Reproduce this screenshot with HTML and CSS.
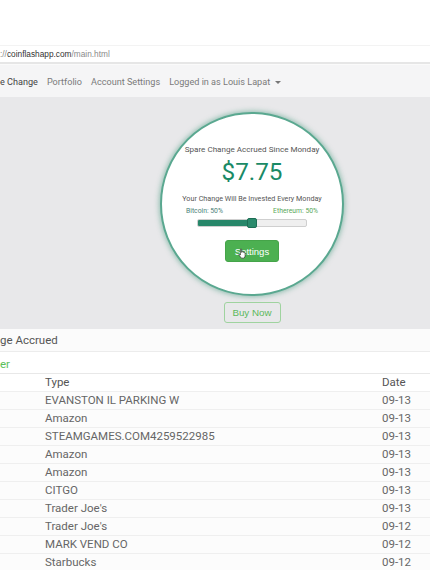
FILE: index.html
```html
<!DOCTYPE html>
<html>
<head>
<meta charset="utf-8">
<link rel="stylesheet" href="styles.css">
</head>
<body>
<div class="page">
  <div class="chrome"></div>
  <div class="urlbar"><span class="dim">://</span><span class="host">coinflashapp.com</span><span class="dim">/main.html</span></div>
  <nav class="nav">
    <span class="nav-item active">e Change</span>
    <span class="nav-item">Portfolio</span>
    <span class="nav-item">Account Settings</span>
    <span class="nav-item">Logged in as Louis Lapat <span class="caret"></span></span>
  </nav>
  <section class="hero">
    <div class="circle">
      <div class="since">Spare Change Accrued Since Monday</div>
      <div class="amount">$7.75</div>
      <div class="invested">Your Change Will Be Invested Every Monday</div>
      <div class="split">
        <span class="btc">Bitcoin: 50%</span>
        <span class="eth">Ethereum: 50%</span>
      </div>
      <div class="slider">
        <div class="fill"></div>
        <div class="handle"></div>
      </div>
      <div class="settings-wrap">
        <button class="btn-settings">Settings</button>
        <svg class="cursor" viewBox="0 0 10 13" width="8" height="11"><path d="M3 1 Q3.8 0.3 4.5 1 V5 H5 V4.3 Q5.7 3.7 6.3 4.3 V5 Q7 4.4 7.6 5 V5.6 Q8.3 5.1 8.9 5.7 V9 Q8.9 11 7.6 12.3 H4.2 L1.2 8.4 Q0.8 7.4 1.8 7.3 L3 8.5 Z" fill="#fff" stroke="#222" stroke-width="0.8" stroke-linejoin="round"/></svg>
      </div>
    </div>
    <button class="btn-buy">Buy Now</button>
  </section>
  <div class="panel-head">ge Accrued</div>
  <div class="tab">er</div>
  <table class="tx">
    <thead><tr><th class="type">Type</th><th class="date">Date</th></tr></thead>
    <tbody>
      <tr><td class="type">EVANSTON IL PARKING W</td><td class="date">09-13</td></tr>
      <tr><td class="type">Amazon</td><td class="date">09-13</td></tr>
      <tr><td class="type">STEAMGAMES.COM4259522985</td><td class="date">09-13</td></tr>
      <tr><td class="type">Amazon</td><td class="date">09-13</td></tr>
      <tr><td class="type">Amazon</td><td class="date">09-13</td></tr>
      <tr><td class="type">CITGO</td><td class="date">09-13</td></tr>
      <tr><td class="type">Trader Joe's</td><td class="date">09-13</td></tr>
      <tr><td class="type">Trader Joe's</td><td class="date">09-12</td></tr>
      <tr><td class="type">MARK VEND CO</td><td class="date">09-12</td></tr>
      <tr><td class="type">Starbucks</td><td class="date">09-12</td></tr>
    </tbody>
  </table>
</div>
</body>
</html>
```

FILE: styles.css
```css
html, body {
  margin: 0;
  padding: 0;
  background: #ffffff;
}
.page {
  width: 430px;
  height: 570px;
  overflow: hidden;
  font-family: Roboto, "Liberation Sans", sans-serif;
  color: #666;
}
.chrome {
  height: 46px;
  background: #ffffff;
  border-bottom: 1px solid #f3f3f3;
  box-sizing: border-box;
}
.urlbar {
  height: 16px;
  line-height: 16px;
  font-family: "Liberation Sans", Arial, sans-serif;
  font-size: 8.3px;
  color: #888;
  background: #fff;
  border-bottom: 2px solid #e6e6e6;
  box-sizing: content-box;
}
.urlbar .host { color: #333; }
.urlbar .dim { color: #8a8a8a; }
.nav {
  height: 33px;
  background: #f5f5f6;
  display: flex;
  align-items: center;
  gap: 9px;
  font-size: 9.1px;
  color: #7a7a7a;
  border-top: 1px solid #fafafa;
  box-sizing: border-box;
  padding-top: 1px;
}
.nav .active { color: #444; }
.caret {
  display: inline-block;
  width: 0;
  height: 0;
  border-left: 3px solid transparent;
  border-right: 3px solid transparent;
  border-top: 3px solid #777;
  vertical-align: middle;
  margin-left: 3px;
}
.hero {
  height: 232px;
  background: #e8e8ea;
  display: flex;
  flex-direction: column;
  align-items: center;
  padding-left: 74px;
  box-sizing: border-box;
}
.circle {
  margin-top: 15px;
  width: 184px;
  height: 184px;
  border-radius: 50%;
  background: #ffffff;
  border: 2px solid #5aa890;
  box-shadow: 0 0 5px 1px rgba(60, 150, 120, 0.5);
  box-sizing: border-box;
  display: flex;
  flex-direction: column;
  align-items: center;
  padding-top: 30px;
}
.since {
  font-size: 8.1px;
  color: #555;
  line-height: 10px;
}
.amount {
  margin-top: 4px;
  font-size: 24.3px;
  line-height: 28px;
  color: #1a8a66;
}
.invested {
  margin-top: 8px;
  font-size: 7.2px;
  line-height: 9px;
  color: #555;
}
.split {
  margin-top: 4px;
  width: 132px;
  display: flex;
  justify-content: space-between;
  font-size: 6.8px;
  line-height: 9px;
}
.btc { color: #4a7f78; }
.eth { color: #5aa85a; }
.slider {
  margin-top: 3px;
  width: 110px;
  height: 8px;
  background: #efefef;
  border: 1px solid #cfcfcf;
  border-radius: 2px;
  position: relative;
  box-sizing: border-box;
}
.fill {
  width: 54px;
  height: 100%;
  background: #27876a;
  border-radius: 1px 0 0 1px;
}
.handle {
  position: absolute;
  left: 49px;
  top: -2px;
  width: 10px;
  height: 10px;
  background: #2a8a6c;
  border: 1px solid #1d6e55;
  border-radius: 2px;
  box-sizing: border-box;
}
.settings-wrap {
  margin-top: 13px;
  position: relative;
}
.btn-settings {
  display: block;
  width: 54px;
  height: 22px;
  background: #4cb051;
  border: 1px solid #45a449;
  border-radius: 3px;
  color: #fff;
  font-family: "Liberation Sans", Arial, sans-serif;
  font-size: 9.5px;
  padding: 0;
}
.cursor {
  position: absolute;
  left: 13px;
  top: 8px;
}
.btn-buy {
  margin-top: 6px;
  width: 57px;
  height: 21px;
  background: transparent;
  border: 1px solid #9fd39f;
  border-radius: 3px;
  color: #5cb85c;
  font-family: "Liberation Sans", Arial, sans-serif;
  font-size: 9.8px;
  padding: 0;
}
.panel-head {
  height: 23px;
  line-height: 23px;
  font-size: 11.5px;
  color: #555;
  background: #fbfbfb;
  border-bottom: 1px solid #ececec;
  box-sizing: border-box;
}
.tab {
  height: 22px;
  line-height: 24px;
  font-size: 11.5px;
  color: #5cc05c;
  border-bottom: 1px solid #e8e8e8;
  box-sizing: border-box;
}
.tx {
  width: 430px;
  border-collapse: collapse;
  font-size: 11.5px;
  color: #666;
}
.tx th, .tx td {
  height: 18px;
  padding: 0;
  text-align: left;
  font-weight: normal;
  border-bottom: 1px solid #efefef;
  box-sizing: border-box;
}
.tx th { color: #555; height: 17px; }
.tx .type { padding-left: 45px; }
.tx .date { width: 48px; }
.tx tbody tr { background: #fcfcfc; }
```
